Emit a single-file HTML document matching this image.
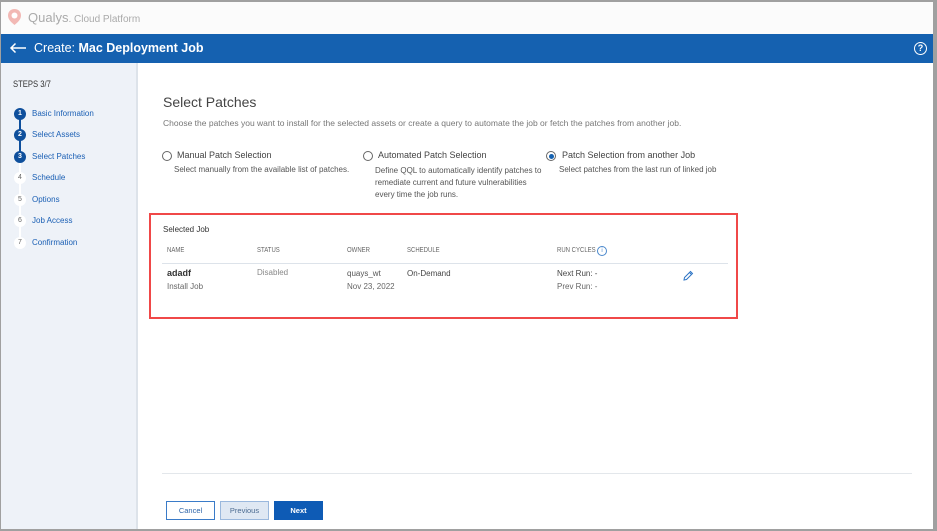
<!DOCTYPE html>
<html><head><meta charset="utf-8"><style>
*{box-sizing:border-box;margin:0;padding:0}
body{width:937px;height:531px;overflow:hidden;font-family:"Liberation Sans",sans-serif;background:#a0a0a0;position:relative}
.frame{position:absolute;left:1px;top:2px;width:932px;height:527px;background:#fff;overflow:hidden}
.top{position:absolute;left:0;top:0;width:100%;height:32px;background:#fbfbfb}
.bar{position:absolute;left:0;top:32px;width:100%;height:29px;background:#1561b0;color:#fff}
.side{position:absolute;left:0;top:61px;width:137px;height:470px;background:#eef2f8;border-right:2px solid #dde3ea}
.a{position:absolute;white-space:nowrap}
.step{position:absolute;left:13px;width:12px;height:12px;border-radius:50%;font-size:7px;text-align:center;line-height:12px;font-weight:bold}
.done{background:#0e4f9c;color:#fff}
.todo{background:#fff;color:#666;font-weight:normal}
.sl{position:absolute;left:31px;font-size:8px;color:#1a5fb4}
.h{font-size:8px;color:#555}
.th{font-size:7.5px;color:#666;transform:scaleX(.8);transform-origin:left}
.radio{position:absolute;width:10px;height:10px;border:1px solid #666;border-radius:50%}
.btn{position:absolute;top:499px;height:19px;font-size:7.5px;text-align:center;line-height:17px;border:1px solid #3a7bc8}
</style></head><body><div class="frame">
<div class="top">
<svg class="a" style="left:6px;top:6px" width="15" height="18" viewBox="0 0 15 18"><path d="M7.5 1C3.5 1 1 3.8 1 7.5c0 4 3.5 7 6.5 9.5 3-2.5 6.5-5.5 6.5-9.5C14 3.8 11.5 1 7.5 1z" fill="#f2b8b4"/><circle cx="7.5" cy="7.5" r="3" fill="#fff"/></svg>
<div class="a" style="left:27px;top:8px;font-size:13px;color:#aaa">Qualys<span style="font-size:10px">. Cloud Platform</span></div>
</div>
<div class="bar">
<svg class="a" style="left:8px;top:8px" width="18" height="12" viewBox="0 0 18 12"><path d="M17 6H2M6.5 1.5L2 6l4.5 4.5" fill="none" stroke="#fff" stroke-width="1.5"/></svg>
<div class="a" style="left:33px;top:7px;font-size:12.5px">Create: <b>Mac Deployment Job</b></div>
<div class="a" style="left:913px;top:8px;width:13px;height:13px;border:1.5px solid #fff;border-radius:50%;font-size:9px;text-align:center;line-height:10px;font-weight:bold">?</div>
</div>
<div class="side">
<div class="a" style="left:12px;top:16px;font-size:9px;color:#333;transform:scaleX(.85);transform-origin:left">STEPS 3/7</div>
<div class="a" style="left:18px;top:50px;width:2px;height:43px;background:#0e4f9c"></div>
<div class="a" style="left:18px;top:93px;width:2px;height:87px;background:#fff"></div>
<div class="step done" style="top:45px">1</div><div class="sl" style="top:46px">Basic Information</div>
<div class="step done" style="top:66px">2</div><div class="sl" style="top:67px">Select Assets</div>
<div class="step done" style="top:88px">3</div><div class="sl" style="top:89px">Select Patches</div>
<div class="step todo" style="top:109px">4</div><div class="sl" style="top:110px">Schedule</div>
<div class="step todo" style="top:131px">5</div><div class="sl" style="top:132px">Options</div>
<div class="step todo" style="top:152px">6</div><div class="sl" style="top:153px">Job Access</div>
<div class="step todo" style="top:174px">7</div><div class="sl" style="top:175px">Confirmation</div>
</div>
<div class="a" style="left:162px;top:92px;font-size:14px;color:#444">Select Patches</div>
<div class="a" style="left:162px;top:116px;font-size:8.5px;color:#777">Choose the patches you want to install for the selected assets or create a query to automate the job or fetch the patches from another job.</div>
<div class="radio" style="left:161px;top:149px"></div>
<div class="a" style="left:176px;top:148px;font-size:9px;color:#444">Manual Patch Selection</div>
<div class="a h" style="left:173px;top:163px">Select manually from the available list of patches.</div>
<div class="radio" style="left:362px;top:149px"></div>
<div class="a" style="left:377px;top:148px;font-size:9px;color:#444">Automated Patch Selection</div>
<div class="a h" style="left:374px;top:163px;line-height:12px">Define QQL to automatically identify patches to<br>remediate current and future vulnerabilities<br>every time the job runs.</div>
<div class="radio" style="left:545px;top:149px;padding:1.5px"><div style="width:5px;height:5px;border-radius:50%;background:#1561b0"></div></div>
<div class="a" style="left:561px;top:148px;font-size:9px;color:#444">Patch Selection from another Job</div>
<div class="a h" style="left:558px;top:163px">Select patches from the last run of linked job</div>
<div class="a" style="left:148px;top:211px;width:589px;height:106px;border:2px solid #f04848"></div>
<div class="a h" style="left:162px;top:223px;color:#333">Selected Job</div>
<div class="a th" style="left:166px;top:243px">NAME</div>
<div class="a th" style="left:256px;top:243px">STATUS</div>
<div class="a th" style="left:346px;top:243px">OWNER</div>
<div class="a th" style="left:406px;top:243px">SCHEDULE</div>
<div class="a th" style="left:556px;top:243px">RUN CYCLES</div>
<div class="a" style="left:596px;top:244px;width:10px;height:10px;border:1px solid #4a88cc;border-radius:50%;font-size:6px;color:#4a88cc;text-align:center;line-height:8px">i</div>
<div class="a" style="left:161px;top:261px;width:566px;height:1px;background:#dde3ea"></div>
<div class="a" style="left:166px;top:266px;font-size:9px;font-weight:bold;color:#333">adadf</div>
<div class="a h" style="left:166px;top:280px;color:#666">Install Job</div>
<div class="a h" style="left:256px;top:266px;color:#888">Disabled</div>
<div class="a h" style="left:346px;top:267px;color:#555">quays_wt</div>
<div class="a h" style="left:346px;top:280px;color:#666">Nov 23, 2022</div>
<div class="a h" style="left:406px;top:267px;color:#444">On-Demand</div>
<div class="a h" style="left:556px;top:267px;color:#444">Next Run: -</div>
<div class="a h" style="left:556px;top:280px;color:#666">Prev Run: -</div>
<svg class="a" style="left:681px;top:268px" width="12" height="12" viewBox="0 0 12 12"><path d="M2 10l.5-2.5L8.5 1.5l2 2-6 6z M7.5 2.5l2 2" fill="none" stroke="#2d74c4" stroke-width="1"/></svg>
<div class="a" style="left:161px;top:471px;width:750px;height:1px;background:#e3e7eb"></div>
<div class="btn" style="left:165px;width:49px;color:#2d64a8;background:#fff">Cancel</div>
<div class="btn" style="left:219px;width:49px;color:#4a6a90;background:#dfe8f3;border-color:#9ab8dd">Previous</div>
<div class="btn" style="left:273px;width:49px;color:#fff;background:#0e5bb5;border-color:#0e5bb5;font-weight:bold">Next</div>
</div></body></html>
